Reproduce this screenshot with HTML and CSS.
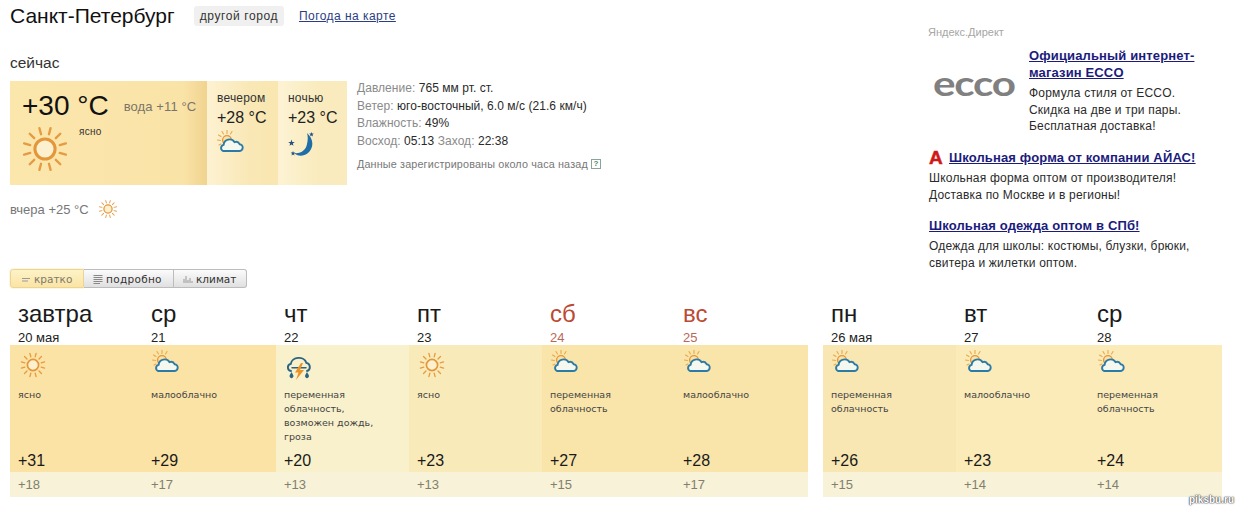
FILE: index.html
```html
<!DOCTYPE html>
<html lang="ru">
<head>
<meta charset="utf-8">
<title>Погода Санкт-Петербург</title>
<link rel="stylesheet" href="styles.css">
</head>
<body>
<svg class="defs" width="0" height="0" aria-hidden="true">
  <defs>
    <symbol id="sun" viewBox="0 0 30 30">
      <g stroke-linecap="round" class="rays">
        <line x1="15" y1="3" x2="15" y2="6.5" transform="rotate(15 15 15)"/>
        <line x1="15" y1="3" x2="15" y2="6.5" transform="rotate(45 15 15)"/>
        <line x1="15" y1="3" x2="15" y2="6.5" transform="rotate(75 15 15)"/>
        <line x1="15" y1="3" x2="15" y2="6.5" transform="rotate(105 15 15)"/>
        <line x1="15" y1="3" x2="15" y2="6.5" transform="rotate(135 15 15)"/>
        <line x1="15" y1="3" x2="15" y2="6.5" transform="rotate(165 15 15)"/>
        <line x1="15" y1="3" x2="15" y2="6.5" transform="rotate(195 15 15)"/>
        <line x1="15" y1="3" x2="15" y2="6.5" transform="rotate(225 15 15)"/>
        <line x1="15" y1="3" x2="15" y2="6.5" transform="rotate(255 15 15)"/>
        <line x1="15" y1="3" x2="15" y2="6.5" transform="rotate(285 15 15)"/>
        <line x1="15" y1="3" x2="15" y2="6.5" transform="rotate(315 15 15)"/>
        <line x1="15" y1="3" x2="15" y2="6.5" transform="rotate(345 15 15)"/>
      </g>
      <circle cx="15" cy="15" r="5.600" fill="#fdf0cf" stroke="#e4963a" stroke-width="1.7"/>
    </symbol>
    <symbol id="partly" viewBox="0 0 30 30">
      <g stroke="#eba84e" stroke-width="1.1" stroke-linecap="round">
        <line x1="1.5" y1="10" x2="4.5" y2="10.5"/>
        <line x1="2.5" y1="5" x2="5" y2="6.5"/>
        <line x1="6" y1="1.5" x2="7.5" y2="4"/>
        <line x1="11" y1="0.5" x2="11" y2="3.5"/>
        <line x1="16" y1="1.5" x2="14.5" y2="4"/>
        <line x1="3" y1="15" x2="5" y2="14"/>
      </g>
      <circle cx="11" cy="10" r="4.4" fill="#fbe2a8" stroke="#e4963a" stroke-width="1.4"/>
      <path d="M7 21 H23 a3.4 3.4 0 0 0 .6 -6.8 a4 4 0 0 0 -5 -2 a6 6 0 0 0 -11 2.600 a3.300 3.300 0 0 0 -.6 6.200z" fill="#f5f8ee" stroke="#2c7aa6" stroke-width="1.9"/>
    </symbol>
    <symbol id="moon" viewBox="0 0 30 30">
      <path d="M20 3 C27 9 27 18 21 23 C16 27 10 26 7 23 C14 24 19 20 20 14 C21 10 21 6 20 3Z" fill="#1f6ea8"/>
      <polygon points="4.500,9.500 5.300,11.900 7.800,11.900 5.800,13.400 6.500,15.800 4.500,14.400 2.500,15.800 3.200,13.400 1.200,11.900 3.700,11.900" fill="#24527e"/>
      <polygon points="24.500,2 25.100,3.600 26.800,3.600 25.500,4.700 26,6.400 24.500,5.400 23,6.400 23.500,4.700 22.200,3.600 23.900,3.600" fill="#24527e"/>
      <polygon points="6,21 6.600,22.600 8.300,22.600 7,23.700 7.500,25.400 6,24.400 4.500,25.400 5,23.700 3.700,22.600 5.400,22.600" fill="#24527e"/>
    </symbol>
    <symbol id="storm" viewBox="0 0 30 30">
      <path d="M7 21 a3.6 3.6 0 0 1 -.2 -7.1 a8 7 0 0 1 15.6 -1 a4.2 4.2 0 0 1 .6 8.1" fill="none" stroke="#2b6484" stroke-width="1.9" stroke-linecap="round"/>
      <path d="M8 17.800 H22" stroke="#2b6484" stroke-width="1.500" stroke-linecap="round"/>
      <polygon points="17,13 11,22.500 14.500,22.500 12,30 20,20 16,20 19,13" fill="#ec9226"/>
      <path d="M7.500 22 l1.700 3 a2 2 0 1 1 -3.400 0z" fill="#2b6484"/>
      <path d="M23 22 l1.700 3 a2 2 0 1 1 -3.400 0z" fill="#2b6484"/>
    </symbol>
  </defs>
</svg>

<div class="page">
  <div class="top">
    <div class="left">
      <div class="head">
        <h1 class="city">Санкт-Петербург</h1>
        <span class="other">другой город</span>
        <a class="maplink" href="#">Погода на карте</a>
      </div>
      <div class="now-title">сейчас</div>
      <div class="now-row">
        <div class="panel">
          <div class="seg seg-main">
            <div class="main-row">
              <span class="main-temp">+30 °C</span>
              <span class="water">вода +11 °C</span>
            </div>
            <div class="main-low">
              <svg class="ico-big"><use href="#sun"/></svg>
              <span class="main-cond">ясно</span>
            </div>
          </div>
          <div class="seg seg-eve">
            <div class="seg-label">вечером</div>
            <div class="seg-temp">+28 °C</div>
            <svg class="ico seg-ico"><use href="#partly"/></svg>
          </div>
          <div class="seg seg-night">
            <div class="seg-label">ночью</div>
            <div class="seg-temp">+23 °C</div>
            <svg class="ico seg-ico"><use href="#moon"/></svg>
          </div>
        </div>
        <div class="details">
          <div class="dline">Давление: <b>765 мм рт. ст.</b></div>
          <div class="dline">Ветер: <b>юго-восточный, 6.0 м/с (21.6 км/ч)</b></div>
          <div class="dline">Влажность: <b>49%</b></div>
          <div class="dline">Восход: <b>05:13</b> Заход: <b>22:38</b></div>
          <div class="note">Данные зарегистрированы около часа назад <span class="qmark">?</span></div>
        </div>
      </div>
      <div class="yesterday">
        <span>вчера +25 °C</span>
        <svg class="ico-small"><use href="#sun"/></svg>
      </div>
    </div>

    <aside class="ads">
      <div class="ads-head">Яндекс.Директ</div>
      <div class="ad ad-first">
        <div class="ecco-box"><span class="ecco">ecco</span></div>
        <div>
          <a class="ad-title" href="#">Официальный интернет-<br>магазин ECCO</a>
          <p class="ad-text">Формула стиля от ECCO.<br>Скидка на две и три пары.<br>Бесплатная доставка!</p>
        </div>
      </div>
      <div class="ad ad-second">
        <div class="ad-titleline"><span class="red-a">А</span><a class="ad-title" href="#">Школьная форма от компании АЙАС!</a></div>
        <p class="ad-text ad-text-17">Школьная форма оптом от производителя!<br>Доставка по Москве и в регионы!</p>
      </div>
      <div class="ad ad-third">
        <a class="ad-title" href="#">Школьная одежда оптом в СПб!</a>
        <p class="ad-text ad-text-17">Одежда для школы: костюмы, блузки, брюки,<br>свитера и жилетки оптом.</p>
      </div>
    </aside>
  </div>

  <div class="tabs">
    <span class="tab tab-active"><svg class="tab-ico" viewBox="0 0 10 10"><path d="M1 4.500H9M1 7H7" stroke="#999" fill="none"/></svg>кратко</span>
    <span class="tab tab-mid"><svg class="tab-ico" viewBox="0 0 10 10"><path d="M0.500 1.500H9.500M0.500 3.500H9.500M0.500 5.500H9.500M0.500 7.500H9.500M0.500 9.500H7" stroke="#888" fill="none"/></svg>подробно</span>
    <span class="tab tab-last"><svg class="tab-ico" viewBox="0 0 10 10"><path d="M1 9V5M3 9V2M5 9V6M7 9V4M9 9V7" stroke="#999" fill="none"/></svg>климат</span>
  </div>

  <div class="forecast">
    <div class="group">
      <div class="day">
        <div class="dname">завтра</div><div class="ddate">20 мая</div>
        <div class="dbody c1"><svg class="ico"><use href="#sun"/></svg><div class="cond">ясно</div><div class="hi">+31</div></div>
        <div class="lo">+18</div>
      </div>
      <div class="day">
        <div class="dname">ср</div><div class="ddate">21</div>
        <div class="dbody c1"><svg class="ico"><use href="#partly"/></svg><div class="cond">малооблачно</div><div class="hi">+29</div></div>
        <div class="lo">+17</div>
      </div>
      <div class="day">
        <div class="dname">чт</div><div class="ddate">22</div>
        <div class="dbody c3"><svg class="ico"><use href="#storm"/></svg><div class="cond">переменная<br>облачность,<br>возможен дождь,<br>гроза</div><div class="hi">+20</div></div>
        <div class="lo">+13</div>
      </div>
      <div class="day">
        <div class="dname">пт</div><div class="ddate">23</div>
        <div class="dbody c4"><svg class="ico"><use href="#sun"/></svg><div class="cond">ясно</div><div class="hi">+23</div></div>
        <div class="lo">+13</div>
      </div>
      <div class="day weekend">
        <div class="dname">сб</div><div class="ddate">24</div>
        <div class="dbody c5"><svg class="ico"><use href="#partly"/></svg><div class="cond">переменная<br>облачность</div><div class="hi">+27</div></div>
        <div class="lo">+15</div>
      </div>
      <div class="day weekend">
        <div class="dname">вс</div><div class="ddate">25</div>
        <div class="dbody c5"><svg class="ico"><use href="#partly"/></svg><div class="cond">малооблачно</div><div class="hi">+28</div></div>
        <div class="lo">+17</div>
      </div>
    </div>
    <div class="group">
      <div class="day">
        <div class="dname">пн</div><div class="ddate">26 мая</div>
        <div class="dbody c7"><svg class="ico"><use href="#partly"/></svg><div class="cond">переменная<br>облачность</div><div class="hi">+26</div></div>
        <div class="lo">+15</div>
      </div>
      <div class="day">
        <div class="dname">вт</div><div class="ddate">27</div>
        <div class="dbody c8"><svg class="ico"><use href="#partly"/></svg><div class="cond">малооблачно</div><div class="hi">+23</div></div>
        <div class="lo">+14</div>
      </div>
      <div class="day">
        <div class="dname">ср</div><div class="ddate">28</div>
        <div class="dbody c8"><svg class="ico"><use href="#partly"/></svg><div class="cond">переменная<br>облачность</div><div class="hi">+24</div></div>
        <div class="lo">+14</div>
      </div>
    </div>
  </div>
</div>
<div class="watermark">piksbu.ru</div>
</body>
</html>
```

FILE: styles.css
```css
* { box-sizing: border-box; }
html, body { margin: 0; padding: 0; }
body {
  position: relative;
  height: 511px;
  overflow: hidden;
  background: #fff;
  color: #1c1c1c;
  font-family: "Liberation Sans", Arial, sans-serif;
  font-size: 12px;
}
.defs { position: absolute; }
.page { padding: 0 17px 0 10px; }
.top { display: flex; justify-content: space-between; height: 269px; }

.head { display: flex; align-items: center; height: 20px; margin-top: 6px; }
.city { flex: none; margin: 0; font-size: 21px; font-weight: 400; line-height: 20px; width: 184px; color: #111; white-space: nowrap; }
.other {
  width: 90px; height: 20px; line-height: 20px; text-align: center;
  background: #f0f0f0; border-radius: 3px; color: #333;
  font-size: 12px; letter-spacing: 0.6px; white-space: nowrap;
}
.maplink { margin-left: 15px; color: #2b3d84; font-size: 12px; letter-spacing: 0.45px; }

.now-title { margin-top: 28px; font-size: 15.5px; line-height: 18px; color: #333; }
.now-row { display: flex; margin-top: 8px; }
.panel { display: flex; width: 337px; height: 104px; margin-top: 1px; }
.seg { height: 104px; padding-top: 9px; }
.seg-main { width: 197px; padding-left: 12px; background: linear-gradient(90deg, #fbe6ac 0, #fae3a7 88%, #f0d390 100%); }
.seg-eve { width: 71px; padding-left: 10px; background: linear-gradient(90deg, #fdf2d2 0, #f9e8b6 60%, #f9e6b0 100%); }
.seg-night { width: 69px; padding-left: 10px; background: linear-gradient(90deg, #fdf3d4 0, #f9ebbd 60%, #f9ebbd 100%); }
.main-row { display: flex; align-items: center; height: 32px; }
.main-temp { font-size: 28px; line-height: 32px; color: #111; white-space: nowrap; }
.water { margin-left: 15px; font-size: 13px; letter-spacing: 0.1px; color: #7a756a; white-space: nowrap; }
.main-low { display: flex; margin-left: -4px; }
.ico-big { width: 54px; height: 54px; flex: none; }
.rays { stroke: #e69a42; stroke-width: 1.3; }
.main-cond { margin: 3px 0 0 7px; font-size: 10px; line-height: 14px; letter-spacing: 0.3px; color: #333; }
.seg-label { font-size: 12px; line-height: 16px; letter-spacing: 0.2px; color: #333; }
.seg-temp { margin-top: 2px; font-size: 16px; line-height: 20px; color: #222; white-space: nowrap; }
.ico { display: block; width: 30px; height: 30px; flex: none; }
.seg-ico { margin: 2px 0 0 -1px; }

.details { margin-left: 10px; }
.dline { line-height: 17.5px; color: #8a8a8a; white-space: nowrap; letter-spacing: 0.05px; }
.dline b { font-weight: 400; color: #2a2a2a; }
.note { display: flex; align-items: center; margin-top: 7px; font-size: 10.8px; line-height: 14px; letter-spacing: 0.15px; color: #777; white-space: pre; }
.qmark {
  width: 10px; height: 10px; border: 1px solid #8aa596;
  font-size: 8px; line-height: 8px; text-align: center; color: #4f8a6a; font-weight: 700;
}
.yesterday { display: flex; align-items: center; height: 16px; margin-top: 16px; font-size: 13px; color: #777; }
.ico-small { width: 22px; height: 22px; margin-left: 8px; flex: none; }

.ads { width: 294px; }
.ads-head { margin-top: 25px; font-size: 11px; line-height: 14px; color: #a6a6a6; }
.ad-first { display: flex; margin-top: 8px; }
.ecco-box { flex: none; width: 101px; height: 76px; padding: 19px 0 0 5px; overflow: hidden; }
.ecco { display: block; font-family: Lato, "Liberation Sans", sans-serif; font-size: 34px; font-weight: 700; line-height: 33px; color: #808080; letter-spacing: -1px; transform-origin: 0 50%; transform: scaleX(1.24); }
.ad-title { font-size: 13px; font-weight: 700; line-height: 17px; letter-spacing: 0.14px; color: #1b1b7c; }
.ad-text { margin: 4px 0 0; line-height: 16.5px; color: #2a2a2a; white-space: nowrap; letter-spacing: 0.2px; }
.ad-text-17 { line-height: 17px; }
.ad-second { margin-top: 14px; padding-left: 1px; }
.ad-third { margin-top: 13px; padding-left: 1px; }
.ad-titleline { display: flex; align-items: center; height: 17px; }
.red-a { flex: none; width: 20px; font-size: 19px; line-height: 17px; font-weight: 700; color: #d01818; -webkit-text-stroke: 0.5px #d01818; }

.tabs { display: flex; width: 237px; height: 19px; font-family: "DejaVu Sans", sans-serif; font-size: 10.5px; }
.tab { display: flex; align-items: center; height: 19px; color: #333; background: linear-gradient(#fbfbfb, #e0e0e0); border: 1px solid #bcbcbc; border-left: 0; }
.tab-ico { width: 10px; height: 10px; flex: none; margin-right: 3px; }
.tab-active { width: 74px; padding-left: 10px; color: #7c7a6c; background: linear-gradient(#fdf3c8, #fbe4a4); border: 1px solid #ecd592; border-radius: 3px 0 0 3px; box-shadow: 0 0 2px #f3dc9a; }
.tab-mid { width: 90px; padding-left: 9px; letter-spacing: 0.3px; }
.tab-last { width: 73px; padding-left: 9px; border-radius: 0 3px 3px 0; }

.forecast { display: flex; gap: 15px; margin-top: 16px; }
.group { display: flex; }
.day { width: 133px; }
.dname { height: 27px; padding-left: 8px; font-size: 24px; line-height: 20px; color: #1a1a1a; }
.ddate { height: 14px; padding-left: 8px; font-size: 13px; line-height: 14px; color: #222; }
.weekend .dname { color: #bb4a34; }
.weekend .ddate { color: #b8685a; }
.dbody { display: flex; flex-direction: column; height: 127px; padding: 5px 0 1px 8px; }
.cond { margin-top: 8px; height: 56px; font-family: "DejaVu Sans", sans-serif; font-size: 9.5px; line-height: 14px; color: #444; white-space: nowrap; }
.hi { margin-top: auto; font-size: 16px; line-height: 20px; color: #1a1a1a; }
.lo { height: 25px; padding-left: 8px; font-size: 13px; line-height: 25px; color: #80806f; background: #f8f2d8; }
.c1 { background: #fbe3a6; }
.c3 { background: #f8f1cb; }
.c4 { background: #f9ebb9; }
.c5 { background: #f9e5aa; }
.c7 { background: #f8e7b2; }
.c8 { background: #faebb9; }

.watermark {
  position: absolute; right: 5px; top: 494px;
  font-size: 10px; font-weight: 700; line-height: 12px; color: #fff;
  text-shadow: 0 0 1px #444, 0 0 1px #444, 0 0 2px #666;
}
```
